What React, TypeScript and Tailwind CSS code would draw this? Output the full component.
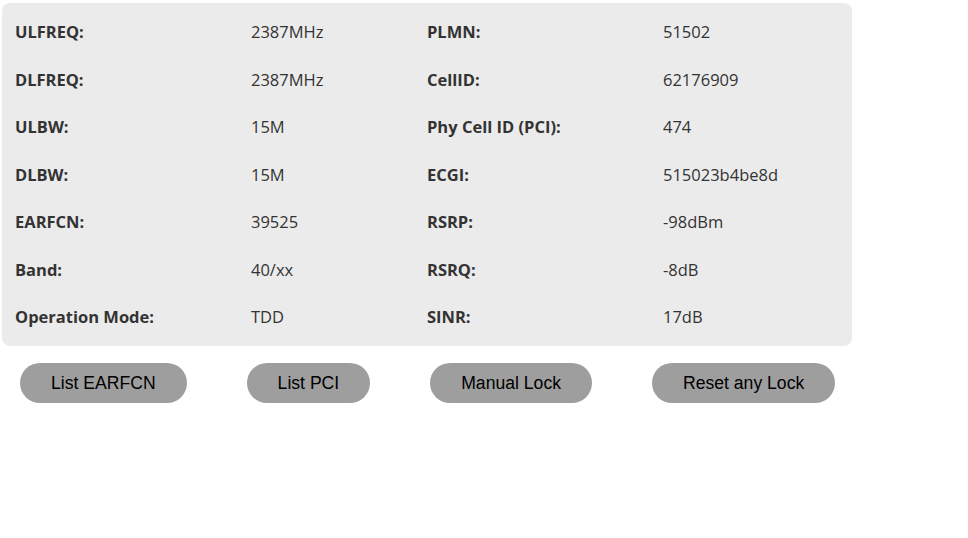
const rows: [string, string, string, string][] = [
  ['ULFREQ:', '2387MHz', 'PLMN:', '51502'],
  ['DLFREQ:', '2387MHz', 'CellID:', '62176909'],
  ['ULBW:', '15M', 'Phy Cell ID (PCI):', '474'],
  ['DLBW:', '15M', 'ECGI:', '515023b4be8d'],
  ['EARFCN:', '39525', 'RSRP:', '-98dBm'],
  ['Band:', '40/xx', 'RSRQ:', '-8dB'],
  ['Operation Mode:', 'TDD', 'SINR:', '17dB'],
];

const buttons = ['List EARFCN', 'List PCI', 'Manual Lock', 'Reset any Lock'];

export default function App() {
  return (
    <div className="w-[968px] h-[538px] bg-white pt-[3px] pl-[2px] text-[#333]">
      <div
        className="w-[850px] bg-[#ebebeb] rounded-lg px-[13px] pt-[6px] pb-[4px] text-[16.5px]"
        style={{ fontFamily: '"Open Sans", "Noto Sans", sans-serif' }}
      >
        {rows.map((r, i) => (
          <div key={i} className="flex items-center h-[47.5px]">
            <div className="w-[236px] font-bold">{r[0]}</div>
            <div className="w-[176px]">{r[1]}</div>
            <div className="w-[236px] font-bold">{r[2]}</div>
            <div className="w-[176px]">{r[3]}</div>
          </div>
        ))}
      </div>
      <div
        className="flex gap-[60px] mt-[17px] ml-[18px]"
        style={{ fontFamily: '"Liberation Sans", Arial, sans-serif' }}
      >
        {buttons.map((b) => (
          <button
            key={b}
            className="h-10 px-[31px] pt-[2px] rounded-full bg-[#9e9e9e] text-black text-[17.6px]"
          >
            {b}
          </button>
        ))}
      </div>
    </div>
  );
}
